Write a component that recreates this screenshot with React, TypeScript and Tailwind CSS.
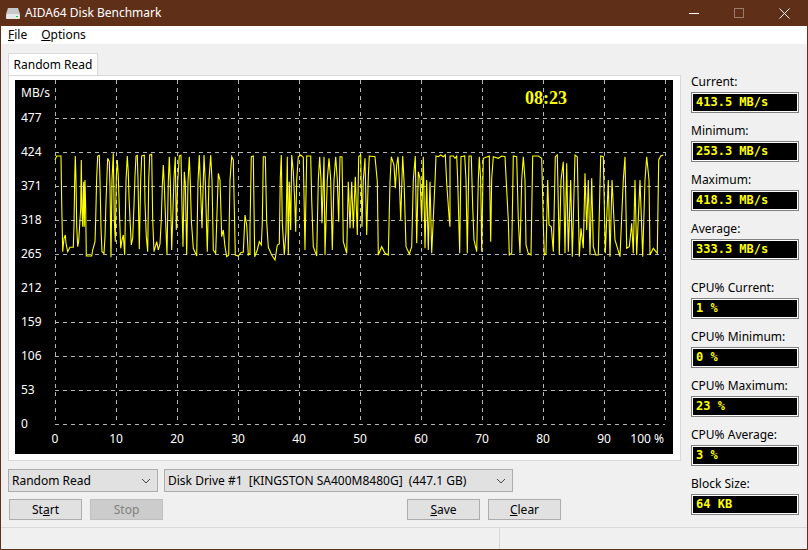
const font = { fontFamily: '"Noto Sans", "Open Sans", sans-serif' };

const hLines = [118, 152, 186, 220, 254, 288, 322, 356, 390, 424];
const vLines = [55, 116, 177, 238, 299, 360, 421, 482, 543, 604, 665];
const yLabels = ["477", "424", "371", "318", "265", "212", "159", "106", "53", "0"];
const xLabels = ["0", "10", "20", "30", "40", "50", "60", "70", "80", "90"];

// trace read off the reference, in 3x crop units
const seg1 = "15,60 20,48 33,48 35,190 38,335 42,295 46,285 48,310 53,335 60,322 70,322 72,255 74,120 76,48 78,120 80,258 83,320 86,303 92,205 94,60 96,208 98,260 101,125 103,260 105,120 107,205 109,348 125,348 128,330 135,305 137,237 140,110 143,48 148,46 150,120 153,265 156,335 162,340 165,290 168,185 171,105 173,55 178,65 180,140 183,352 186,120 190,40 193,240 196,305 199,110 202,60 205,110 208,205 212,325 216,300 220,285 224,345 228,122 232,48 235,98 237,170 241,255 244,315 248,295 252,195 255,108 258,48 262,46 264,120 268,328 272,120 275,48 283,46 285,190 289,290 293,335 296,120 299,45 305,43 308,240 312,335 320,305 325,330 330,312 334,240 337,135 340,75 343,135 347,250 351,345 355,125 358,50 361,125 365,330 372,115 376,50 379,270 383,125 388,48 393,46 396,200 399,320 403,95 406,130 410,345 414,125 418,50 421,125 424,240 430,325 440,348 444,125 448,45 451,125 456,265 462,45 466,125 472,335 477,120 482,45 486,120 490,330 497,340 505,100 510,120 515,290 520,270 525,320 530,350 536,345 540,120 545,50 550,60 553,205 556,345 565,348 572,338 580,336 585,225 590,255 595,345 600,340";
const seg2 = "0,265 4,50 10,48 12,200 14,350 22,330 28,305 34,315 37,250 40,50 46,50 50,245 55,322 65,345 75,360 82,315 88,312 91,115 94,45 97,250 103,345 108,275 112,50 115,345 118,125 122,270 125,45 130,95 134,180 137,275 140,120 145,50 152,45 160,52 165,330 170,48 182,48 185,180 190,320 200,348 205,120 209,50 213,120 216,250 222,50 225,345 232,120 237,55 242,120 247,330 252,120 257,50 262,120 266,245 270,50 276,50 280,305 290,340 295,125 300,265 305,125 310,265 316,110 322,285 326,50 332,45 336,260 340,120 345,55 350,285 355,110 358,48 375,50 382,125 385,345 395,320 405,340 415,345 420,125 424,50 432,75 436,145 440,75 444,50 448,120 452,240 458,48 462,120 468,320 478,342 485,320 490,120 496,48 500,310 505,95 510,115 515,245 520,50 525,325 530,120 535,330 540,125 545,340 555,125 558,48 565,50 572,45 580,50 586,45 590,130 598,240 600,260";
const seg3 = "0,48 10,48 15,55 20,48 23,120 27,265 29,340 33,50 44,48 48,120 52,340 57,48 64,48 68,200 72,300 80,335 85,120 88,50 92,120 95,335 100,55 118,48 120,180 122,305 125,115 130,50 145,55 155,48 165,50 170,150 175,240 178,345 185,340 190,48 200,50 205,240 210,340 215,120 220,50 225,120 228,315 235,340 243,345 248,48 265,48 275,55 280,250 283,345 288,340 293,120 297,255 304,260 310,335 316,50 322,45 328,345 333,120 340,65 345,340 350,70 355,335 362,120 367,350 375,45 382,50 388,350 393,265 400,325 405,100 410,270 415,120 420,345 425,115 430,320 437,345 445,345 452,48 460,50 466,340 475,120 480,350 486,120 495,300 510,350 520,120 525,50 530,325 538,320 545,250 550,340 555,120 560,345 570,120 578,350 585,120 590,50 597,120 600,345 610,325 622,340 626,60 632,48 640,45";

function toScreen(seg: string, ox: number, oy: number) {
  return seg
    .split(" ")
    .map((p) => {
      const [x, y] = p.split(",").map(Number);
      return `${(ox + x / 3).toFixed(1)},${(oy + y / 3).toFixed(1)}`;
    })
    .join(" ");
}

const trace = [toScreen(seg1, 50, 140), toScreen(seg2, 250, 140), toScreen(seg3, 450, 140)].join(" ");

function Chart() {
  // svg origin is the page position of the black area: 15,80
  return (
    <svg width="658" height="374" viewBox="15 80 658 374" className="block bg-black">
      {vLines.map((x) => (
        <line key={x} x1={x + 0.5} x2={x + 0.5} y1="80" y2="424" stroke="#b4b4b4" strokeDasharray="4 4" shapeRendering="crispEdges" />
      ))}
      {hLines.map((y) => (
        <line key={y} x1="55" x2="665" y1={y + 0.5} y2={y + 0.5} stroke="#b4b4b4" strokeDasharray="4 4" shapeRendering="crispEdges" />
      ))}
      <polyline points={trace} fill="none" stroke="#ffff00" strokeWidth="1.1" />
      <g fill="#ffffff" fontSize="12" style={font}>
        <text x="21" y="97">MB/s</text>
        {yLabels.map((l, i) => (
          <text key={l} x="21" y={hLines[i] + 4}>{l}</text>
        ))}
        {xLabels.map((l, i) => (
          <text key={l} x={vLines[i]} y="443" textAnchor="middle">{l}</text>
        ))}
        <text x="664" y="443" textAnchor="end">100 %</text>
      </g>
      <text x="525" y="104" fill="#ffff00" fontSize="18" fontWeight="700" style={{ fontFamily: '"Liberation Serif", serif' }}>08:23</text>
    </svg>
  );
}

function Stat({ label, value, className }: { label: string; value: string; className?: string }) {
  return (
    <div className={className}>
      <div className="h-[18px] text-[12px] leading-[18px] text-[#000]">{label}</div>
      <div className="mt-[1px] h-[21px] w-[108px] border border-[#808080] bg-white p-[1px]">
        <div className="h-full bg-black pl-[3px] text-[12px] leading-[17px] font-bold text-[#ffff00]" style={{ fontFamily: '"DejaVu Sans Mono", monospace' }}>
          {value}
        </div>
      </div>
    </div>
  );
}

function Combo({ text, className }: { text: string; className: string }) {
  return (
    <div className={`flex h-[23px] items-center justify-between border border-[#adadad] bg-[#e1e1e1] pl-[3px] pr-[6px] text-[12px] whitespace-pre ${className}`}>
      <span>{text}</span>
      <svg width="10" height="6" viewBox="0 0 10 6" fill="none" stroke="#444" strokeWidth="1">
        <path d="M1 1l4 4 4-4" />
      </svg>
    </div>
  );
}

function Btn({ children, disabled, className }: { children: React.ReactNode; disabled?: boolean; className: string }) {
  return (
    <div className={`flex h-[21px] w-[73px] items-center justify-center border text-[12px] ${disabled ? "border-[#bfbfbf] bg-[#cccccc] text-[#808080]" : "border-[#adadad] bg-[#e1e1e1]"} ${className}`}>
      {children}
    </div>
  );
}

export default function App() {
  return (
    <div className="flex h-[550px] w-[808px] flex-col overflow-hidden border-x border-b border-[#5f2f17] bg-[#f0f0f0] text-black" style={font}>
      {/* title bar */}
      <div className="flex h-[26px] shrink-0 items-center bg-[#5f2f17] pl-[4px] text-[12px] text-white">
        <svg width="16" height="14" viewBox="0 0 16 14" className="mr-[4px]">
          <path d="M3 2h10l2 6H1z" fill="#c8c8c8" />
          <rect x="1" y="8" width="14" height="5" rx="1" fill="#e8e8e8" />
          <rect x="11" y="10" width="2" height="1" fill="#30c040" />
        </svg>
        <span>AIDA64 Disk Benchmark</span>
        <div className="ml-auto flex items-center">
          <div className="flex h-[26px] w-[45px] items-center justify-center">
            <div className="h-px w-[10px] bg-white" />
          </div>
          <div className="flex h-[26px] w-[45px] items-center justify-center">
            <div className="h-[10px] w-[10px] border border-[#9a7a68]" />
          </div>
          <div className="flex h-[26px] w-[46px] items-center justify-center">
            <svg width="11" height="11" viewBox="0 0 11 11" stroke="#fff" strokeWidth="1">
              <path d="M.5.5l10 10M10.5.5l-10 10" />
            </svg>
          </div>
        </div>
      </div>

      {/* menu */}
      <div className="flex h-[18px] shrink-0 items-center gap-[14px] bg-white pl-[7px] text-[12px]">
        <span><u>F</u>ile</span>
        <span><u>O</u>ptions</span>
      </div>

      <div className="flex flex-1 pl-[7px]">
        <div className="w-[673px]">
          <div className="mt-[9px] ml-0 flex h-[22px] w-[90px] items-center justify-center border border-b-0 border-[#d9d9d9] bg-white text-[12px]">
            Random Read
          </div>
          <div className="h-[386px] border border-[#d9d9d9] bg-white px-[6px] pt-[4px]">
            <Chart />
          </div>
          <div className="mt-[8px] flex gap-[6px]">
            <Combo text="Random Read" className="w-[150px]" />
            <Combo text="Disk Drive #1  [KINGSTON SA400M8480G]  (447.1 GB)" className="w-[349px]" />
          </div>
          <div className="mt-[7px] flex pl-[1px]">
            <Btn className="">St<u>a</u>rt</Btn>
            <Btn disabled className="ml-[8px]">Stop</Btn>
            <Btn className="ml-[244px]"><u>S</u>ave</Btn>
            <Btn className="ml-[8px]"><u>C</u>lear</Btn>
          </div>
        </div>
        <div className="ml-[10px] pt-[29px]">
          <Stat label="Current:" value="413.5 MB/s" />
          <Stat label="Minimum:" value="253.3 MB/s" className="mt-[9px]" />
          <Stat label="Maximum:" value="418.3 MB/s" className="mt-[9px]" />
          <Stat label="Average:" value="333.3 MB/s" className="mt-[9px]" />
          <Stat label="CPU% Current:" value="1 %" className="mt-[19px]" />
          <Stat label="CPU% Minimum:" value="0 %" className="mt-[9px]" />
          <Stat label="CPU% Maximum:" value="23 %" className="mt-[9px]" />
          <Stat label="CPU% Average:" value="3 %" className="mt-[9px]" />
          <Stat label="Block Size:" value="64 KB" className="mt-[9px]" />
        </div>
      </div>

      {/* status bar */}
      <div className="flex h-[22px] shrink-0 border-t border-[#d9d9d9]">
        <div className="w-[499px] border-r border-[#d9d9d9]" />
      </div>
    </div>
  );
}
